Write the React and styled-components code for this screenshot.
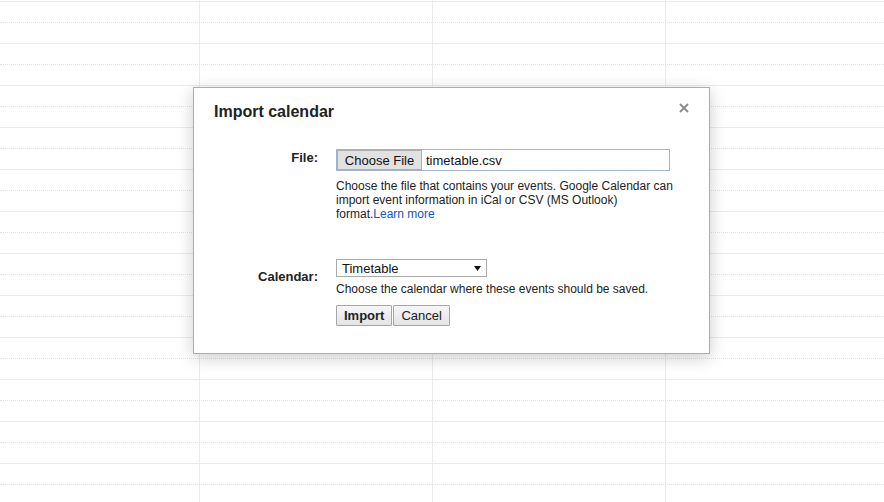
import React from "react";
import styled, { createGlobalStyle } from "styled-components";

const GlobalStyle = createGlobalStyle`
  html, body {
    margin: 0;
    padding: 0;
    background: #fff;
  }
  body {
    font-family: "Liberation Sans", Arial, sans-serif;
    color: #222;
  }
`;

const ROWS = 12;

const CloseIcon = () => (
  <svg width="10" height="10" viewBox="0 0 10 10">
    <path d="M1 1L9 9M9 1L1 9" stroke="#8c8c8c" strokeWidth="2" />
  </svg>
);

const Caret = () => (
  <svg width="7" height="5" viewBox="0 0 7 5">
    <path d="M0 0H7L3.5 5Z" fill="#111" />
  </svg>
);

export default function App() {
  return (
    <>
      <GlobalStyle />
      <Page>
        <Sheet>
          {Array.from({ length: ROWS }).map((_, i) => (
            <SheetRow key={i}>
              <HalfHour />
            </SheetRow>
          ))}
        </Sheet>
        <Dialog>
          <Header>
            <Title>Import calendar</Title>
            <CloseButton aria-label="Close">
              <CloseIcon />
            </CloseButton>
          </Header>
          <Form>
            <Label>File:</Label>
            <Field>
              <FileBox>
                <ChooseButton>Choose File</ChooseButton>
                <FileName>timetable.csv</FileName>
              </FileBox>
              <Help gap={8}>
                Choose the file that contains your events. Google Calendar can
                import event information in iCal or CSV (MS Outlook)
                format.<Link href="#">Learn more</Link>
              </Help>
            </Field>
            <Label offset={10}>Calendar:</Label>
            <Field>
              <SelectBox>
                <span>Timetable</span>
                <Caret />
              </SelectBox>
              <Help gap={5}>
                Choose the calendar where these events should be saved.
              </Help>
              <Actions>
                <ActionButton primary>Import</ActionButton>
                <ActionButton>Cancel</ActionButton>
              </Actions>
            </Field>
          </Form>
        </Dialog>
      </Page>
    </>
  );
}

const Page = styled.div`
  position: relative;
  width: 884px;
  height: 502px;
  overflow: hidden;
  background: #fff;
`;

const Sheet = styled.div`
  display: flex;
  flex-direction: column;
  height: 100%;
  padding-top: 1px;
  box-sizing: border-box;
  background-image: linear-gradient(to right, #ebebeb 1px, transparent 1px);
  background-size: 233px 100%;
  background-position: 199px 0;
`;

const SheetRow = styled.div`
  flex: none;
  height: 42px;
  box-sizing: border-box;
  border-top: 1px solid #ebebeb;
`;

const HalfHour = styled.div`
  height: 21px;
  box-sizing: border-box;
  border-bottom: 1px dotted #e2e2e2;
`;

const Dialog = styled.div`
  position: absolute;
  left: 193px;
  top: 87px;
  width: 517px;
  box-sizing: border-box;
  background: #fff;
  border: 1px solid #acacac;
  box-shadow: 0 4px 16px rgba(0, 0, 0, 0.2);
  padding: 14px 20px 27px 20px;
`;

const Header = styled.div`
  display: flex;
  justify-content: space-between;
  align-items: flex-start;
`;

const Title = styled.h2`
  margin: 0;
  font-size: 16px;
  line-height: 20px;
  font-weight: bold;
  color: #222;
`;

const CloseButton = styled.button`
  appearance: none;
  border: none;
  background: transparent;
  padding: 0;
  margin-top: 1px;
  width: 10px;
  height: 10px;
  display: flex;
  cursor: pointer;
`;

const Form = styled.div`
  display: grid;
  grid-template-columns: 104px 352px;
  column-gap: 18px;
  row-gap: 38px;
  margin-top: 27px;
  align-items: start;
`;

const Label = styled.div`
  text-align: right;
  font-size: 13px;
  font-weight: bold;
  color: #222;
  padding-top: ${(p) => p.offset || 1}px;
`;

const Field = styled.div`
  display: flex;
  flex-direction: column;
  align-items: flex-start;
`;

const FileBox = styled.div`
  display: flex;
  align-items: stretch;
  width: 334px;
  height: 22px;
  box-sizing: border-box;
  border: 1px solid #a3b4ca;
  font-size: 13px;
`;

const ChooseButton = styled.button`
  appearance: none;
  flex: none;
  margin: 0;
  padding: 0;
  width: 85px;
  white-space: nowrap;
  border: 1px solid #adadad;
  background: #e1e1e1;
  font: inherit;
  color: #111;
`;

const FileName = styled.span`
  display: flex;
  align-items: center;
  padding-left: 4px;
  color: #111;
`;

const Help = styled.p`
  margin: ${(p) => p.gap}px 0 0 0;
  font-size: 12px;
  line-height: normal;
  color: #222;
`;

const Link = styled.a`
  color: #15c;
  text-decoration: none;
`;

const SelectBox = styled.div`
  display: flex;
  align-items: center;
  justify-content: space-between;
  width: 151px;
  height: 18px;
  box-sizing: border-box;
  border: 1px solid #a9a9a9;
  padding: 0 5px 0 5px;
  font-size: 13px;
  color: #111;
`;

const Actions = styled.div`
  display: flex;
  gap: 1px;
  margin-top: 9px;
`;

const ActionButton = styled.button`
  appearance: none;
  margin: 0;
  height: 21px;
  padding: 0 7px;
  border: 1px solid #a6a6a6;
  border-radius: 1px;
  background: linear-gradient(#f6f6f6, #e4e4e4);
  font-family: inherit;
  font-size: 13px;
  font-weight: ${(p) => (p.primary ? "bold" : "normal")};
  color: #222;
`;
